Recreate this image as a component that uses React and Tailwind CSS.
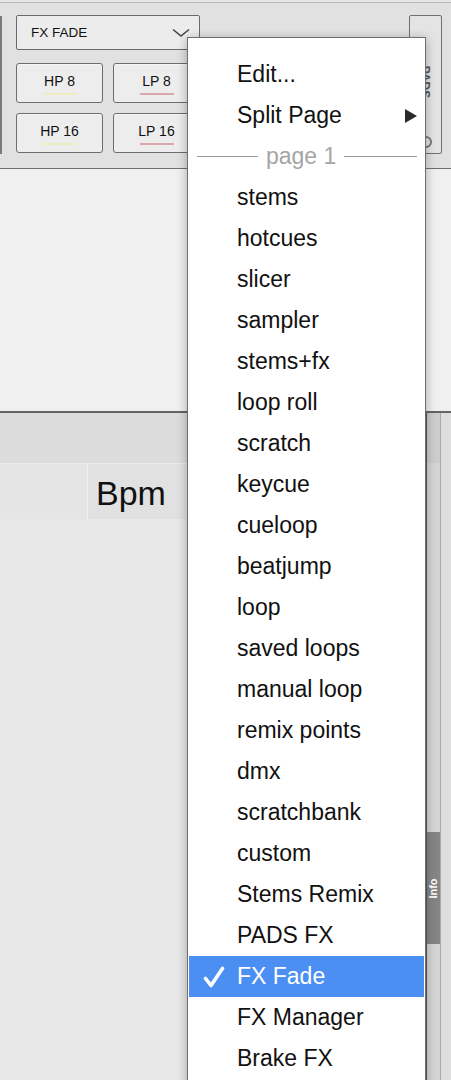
import React from "react";

const items = [
  "stems",
  "hotcues",
  "slicer",
  "sampler",
  "stems+fx",
  "loop roll",
  "scratch",
  "keycue",
  "cueloop",
  "beatjump",
  "loop",
  "saved loops",
  "manual loop",
  "remix points",
  "dmx",
  "scratchbank",
  "custom",
  "Stems Remix",
  "PADS FX",
  "FX Fade",
  "FX Manager",
  "Brake FX",
];

function PadButton({ label, color }) {
  return (
    <div className="w-[87px] h-[40px] shrink-0 rounded-[3px] border border-[#6e6e6e] bg-[#ededed] flex flex-col items-center justify-center shadow-[inset_0_1px_0_#f7f7f7]">
      <span className="text-[14px] leading-none text-[#111] mt-[2px]">{label}</span>
      <span className={`mt-[5px] w-[34px] h-[2px] ${color}`}></span>
    </div>
  );
}

export default function App() {
  return (
    <div className="relative w-[451px] h-[1080px] overflow-hidden bg-[#e8e8e8] font-['Liberation_Sans',Arial,sans-serif]">
      {/* Top panel */}
      <div className="h-[169px] bg-[#e1e1e1] border-b border-[#707070] flex flex-col">
        <div className="h-[2px] bg-[#e6e6e6]"></div>
        <div className="h-px bg-[#b8b8b8]"></div>
        <div className="flex flex-1">
          <div className="w-[2px] mt-[13px] h-[138px] bg-[#7a7a7a]"></div>
          <div className="ml-[14px] mt-[12px] flex flex-col w-[184px]">
            <div className="h-[35px] rounded-[2px] border border-[#6a6a6a] bg-[#ececec] flex items-center justify-between pl-[14px] pr-[9px]">
              <span className="text-[13.5px] text-[#111] leading-none">FX FADE</span>
              <svg width="18" height="10" viewBox="0 0 18 10">
                <path d="M1 1.5 L9 8 L17 1.5" fill="none" stroke="#444" strokeWidth="1.6" />
              </svg>
            </div>
            <div className="flex gap-[10px] mt-[13px]">
              <PadButton label="HP 8" color="bg-[#ededbf]" />
              <PadButton label="LP 8" color="bg-[#d9a7ab]" />
            </div>
            <div className="flex gap-[10px] mt-[10px]">
              <PadButton label="HP 16" color="bg-[#ededbf]" />
              <PadButton label="LP 16" color="bg-[#d9a7ab]" />
            </div>
          </div>
          <div className="ml-[209px] mt-[12px] w-[33px] h-[139px] rounded-[2px] border border-[#707070] bg-[#e4e4e4] flex flex-col items-center">
            <div className="mt-[44px] h-[44px] flex items-center justify-center">
              <span className="rotate-90 text-[12px] font-bold text-[#555] leading-none whitespace-nowrap">PADS</span>
            </div>
            <div className="mt-[32px] w-[12px] h-[12px] rounded-full border-2 border-[#777]"></div>
          </div>
        </div>
      </div>

      {/* Light area */}
      <div className="h-[242px] bg-[#f0f0f0]"></div>
      <div className="h-[2px] bg-[#656565]"></div>

      {/* Lower section */}
      <div className="flex">
        <div className="w-[426px] flex flex-col">
          <div className="h-[50px] bg-[#dcdcdc]"></div>
          <div className="h-[56px] flex border-t border-[#ececec]">
            <div className="w-[88px] bg-[#e5e5e5] border-r border-[#efefef]"></div>
            <div className="w-[98px] bg-[#e1e1e1] flex items-center pl-[8px] pt-[2px]">
              <span className="text-[34px] leading-none text-[#111]">Bpm</span>
            </div>
            <div className="flex-1 bg-[#e4e4e4]"></div>
          </div>
          <div className="h-[600px] bg-[#e8e8e8]"></div>
        </div>
        <div className="flex h-[700px]">
          <div className="w-px bg-[#5a5a5a]"></div>
          <div className="w-[13px] bg-[#d5d5d5] flex flex-col">
            <div className="h-[50px] bg-[#cdcdcd]"></div>
            <div className="h-[369px]"></div>
            <div className="h-[112px] bg-[#858585] flex items-center justify-center">
              <span className="-rotate-90 text-[11px] font-bold text-white leading-none whitespace-nowrap">Info</span>
            </div>
          </div>
          <div className="w-px bg-[#a9a9a9]"></div>
          <div className="w-[10px] bg-[#dedede]"></div>
        </div>
      </div>

      {/* Popup menu */}
      <div className="absolute left-[187px] top-[37px] w-[239px] h-[1100px] bg-white border border-[#6f6f6f] shadow-[0_2px_10px_rgba(0,0,0,0.3)] pt-[16px]">
        <div className="h-[41px] flex items-center pl-[49px] text-[23px] text-[#111]">Edit...</div>
        <div className="h-[41px] flex items-center justify-between pl-[49px] pr-[8px] text-[23px] text-[#111]">
          <span>Split Page</span>
          <svg width="12" height="14" viewBox="0 0 12 14">
            <path d="M0 0 L12 7 L0 14 Z" fill="#2a2a2a" />
          </svg>
        </div>
        <div className="h-[41px] flex items-center pl-[9px] pr-[8px]">
          <div className="w-[61px] h-px bg-[#9c9c9c]"></div>
          <span className="px-[8px] text-[23px] text-[#a5a5a5] leading-none">page 1</span>
          <div className="flex-1 h-px bg-[#9c9c9c]"></div>
        </div>
        {items.map((it) =>
          it === "FX Fade" ? (
            <div key={it} className="h-[41px] mx-px flex items-center bg-[#4c8ff3] text-white text-[23px] relative">
              <svg className="absolute left-[14px] top-[10px]" width="22" height="22" viewBox="0 0 22 22">
                <path d="M2.5 12.5 L8 19.5 L19.5 2.5" fill="none" stroke="white" strokeWidth="3.6" strokeLinecap="round" strokeLinejoin="round" />
              </svg>
              <span className="pl-[48px]">{it}</span>
            </div>
          ) : (
            <div key={it} className="h-[41px] flex items-center pl-[49px] text-[23px] text-[#111]">
              {it}
            </div>
          )
        )}
      </div>
    </div>
  );
}
